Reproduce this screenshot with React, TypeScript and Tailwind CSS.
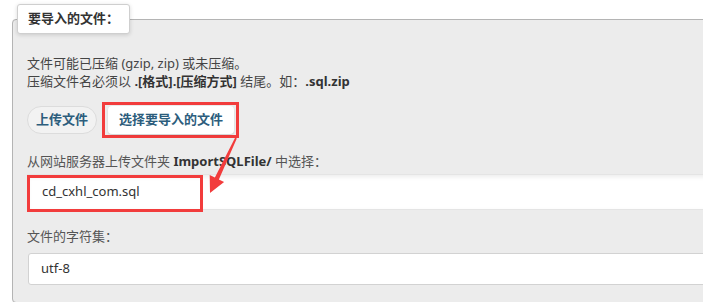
import React from "react";

const font = { fontFamily: '"Noto Sans", "Noto Sans CJK SC", sans-serif' };

const Arrow = () => (
  <svg
    className="absolute left-0 top-0 pointer-events-none"
    width="703"
    height="302"
    viewBox="0 0 703 302"
  >
    <polygon
      points="235.2,137.6 236.8,138.4 218.9,179.6 224.1,182.1 210,193 209.7,175.1 214.9,177.6"
      fill="#f23c3c"
    />
  </svg>
);

export default function App() {
  return (
    <div
      className="relative w-[703px] h-[302px] overflow-hidden bg-white text-[13px] text-[#444]"
      style={font}
    >
      <fieldset className="ml-[12px] mt-[4px] w-[720px] border border-[#b4b4b4] rounded-[4px] bg-[#ececec] pl-[14px] pt-[20px] pb-[17px]">
        <legend className="ml-[-10px] h-[30px] px-[10px] flex items-center bg-white border border-[#cfcfcf] rounded-[3px] shadow-[0_1px_4px_rgba(0,0,0,0.15)] font-bold text-[#333]">
          要导入的文件：
        </legend>

        <p className="leading-[18px]">文件可能已压缩 (gzip, zip) 或未压缩。</p>
        <p className="leading-[18px]">
          压缩文件名必须以 <b className="text-[#333]">.[格式].[压缩方式]</b> 结尾。如：
          <b className="text-[#333]">.sql.zip</b>
        </p>

        <div className="mt-[12px] flex items-center gap-[5px]">
          <button className="h-[28px] px-[8px] rounded-[14px] border border-[#dcdcdc] bg-[#f2f2f2] font-bold text-[#2c5d7c]">
            上传文件
          </button>
          <div className="border-[3px] border-[#f23c3c] pl-[3px] pr-[2px] py-[1px]">
            <button className="h-[28px] px-[11px] rounded-[4px] bg-white shadow-[0_1px_2px_rgba(0,0,0,0.12)] font-bold text-[#2c5d7c]">
              选择要导入的文件
            </button>
          </div>
        </div>

        <p className="mt-[14px] leading-[18px] text-[#555]">
          从网站服务器上传文件夹 <b className="text-[#333]">ImportSQLFile/</b> 中选择：
        </p>

        <div className="relative mt-[4px] h-[36px] flex items-center pl-[14px] bg-white border border-[#e4e4e4] shadow-[inset_0_2px_4px_rgba(0,0,0,0.08)] text-[#333]">
          cd_cxhl_com.sql
          <div className="absolute left-[-1px] top-0 w-[176px] h-[37px] border-[3px] border-[#f23c3c]" />
        </div>

        <p className="mt-[17px] leading-[18px] text-[#555]">文件的字符集：</p>

        <div className="mt-[8px] ml-[1px] h-[32px] flex items-center pl-[12px] bg-white border border-[#d2d2d2] rounded-[3px] text-[#333]">
          utf-8
        </div>
      </fieldset>
      <Arrow />
    </div>
  );
}
